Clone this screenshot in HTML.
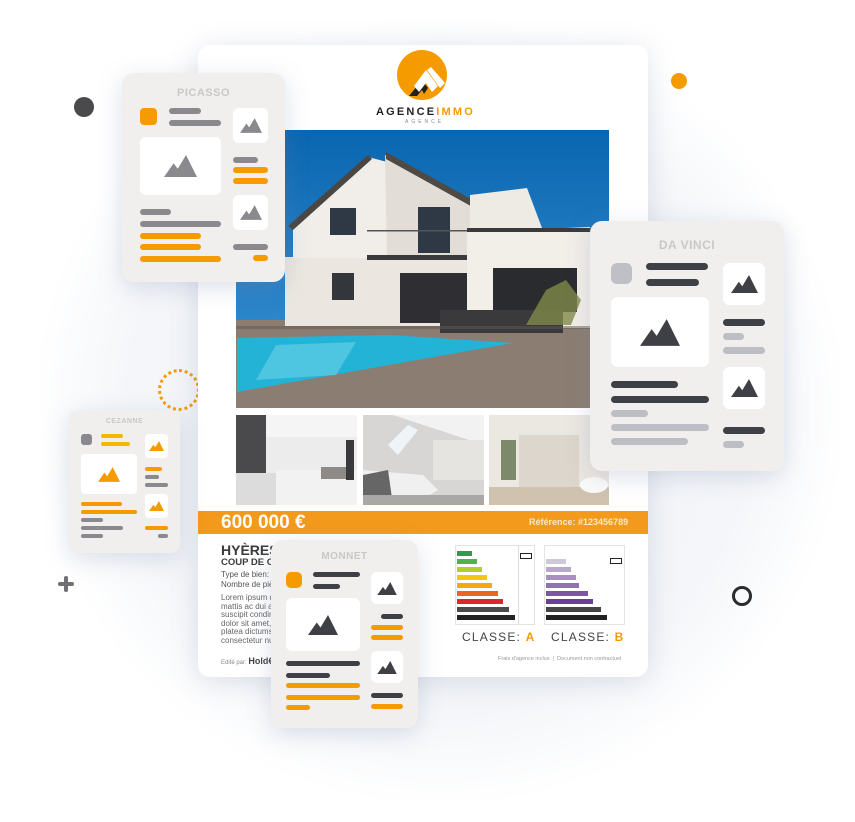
<!DOCTYPE html>
<html><head><meta charset="utf-8"><style>
*{margin:0;padding:0;box-sizing:border-box}
body{width:855px;height:822px;position:relative;overflow:hidden;background:#fff;font-family:"Liberation Sans",sans-serif}
.a{position:absolute}
.card{position:absolute;background:#f0efee;border-radius:12px;box-shadow:0 6px 24px rgba(120,135,170,.25)}
.b{position:absolute;border-radius:4px}
.box{position:absolute;background:#fff;border-radius:6px;display:flex;align-items:center;justify-content:center}
.t{position:absolute;font-weight:bold;color:#c9c8c8;text-align:center;letter-spacing:.5px}
.g{background:#8a898e}.o{background:#f59b00}.d{background:#3f4046}.l{background:#bdbec4}.y{background:#f5b800}
</style></head><body>
<div class="a" style="left:40px;top:20px;width:800px;height:780px;border-radius:45%;background:radial-gradient(ellipse at center,#eef1f6 0%,#f4f6f9 55%,rgba(255,255,255,0) 72%)"></div>

<!-- decorations -->
<div class="a" style="left:74px;top:97px;width:20px;height:20px;border-radius:50%;background:#4a4a4c"></div>
<div class="a" style="left:671px;top:73px;width:16px;height:16px;border-radius:50%;background:#f59b00"></div>
<div class="a" style="left:732px;top:586px;width:20px;height:20px;border-radius:50%;border:3px solid #2c2c2e"></div>
<div class="a" style="left:58px;top:582px;width:16px;height:4px;background:#707075;border-radius:2px"></div>
<div class="a" style="left:64px;top:576px;width:4px;height:16px;background:#707075;border-radius:2px"></div>
<div class="a" style="left:158px;top:369px;width:42px;height:42px;border-radius:50%;border:3px dotted #f59b00"></div>

<!-- main doc -->
<div class="a" style="left:198px;top:45px;width:450px;height:632px;background:#fff;border-radius:12px;box-shadow:0 4px 28px rgba(110,125,160,.22)"></div>
<div class="a" style="left:397px;top:50px;width:50px;height:50px;border-radius:50%;background:#f59b00;overflow:hidden">
<svg width="50" height="50" viewBox="0 0 50 50"><path d="M12 46 L25 30 L31 38 L27 44 L25 40 L20 46 Z" fill="#231f20"/><path d="M17 36 L29 20 L41 36 L35 42 L29 33 L22 42Z" fill="#fff"/><path d="M30 20 L34 17 L48 33 L43 38Z" fill="#fff"/></svg></div>
<div class="a" style="left:376px;top:106px;width:96px;font-size:11px;font-weight:bold;letter-spacing:2.2px;color:#222;white-space:nowrap">AGENCE<span style="color:#f59b00">IMMO</span></div>
<div class="a" style="left:405px;top:119px;font-size:5px;letter-spacing:3px;color:#888">AGENCE</div>

<!-- photo -->
<svg class="a" style="left:236px;top:130px" width="373" height="278" viewBox="0 0 373 278">
<defs><linearGradient id="sky" x1="0" y1="0" x2="0" y2="1"><stop offset="0" stop-color="#0a66b0"/><stop offset="1" stop-color="#3d95d6"/></linearGradient></defs>
<rect width="373" height="278" fill="url(#sky)"/>
<rect y="190" width="373" height="88" fill="#8c7d72"/>
<polygon points="1,208 154,205 277,213 1,262" fill="#22b3d6"/>
<polygon points="40,215 120,212 100,245 20,250" fill="#6dd0e8" opacity=".6"/>
<polygon points="49,127 231,127 231,196 49,196" fill="#ebe7e0"/>
<polygon points="57,96 132,27 151,32 151,128 57,128" fill="#f1eee9"/>
<polygon points="52,96 132,25 136,29 57,100" fill="#4a4644"/>
<polygon points="149,25 262,86 262,128 151,128" fill="#e2ddd6"/>
<polygon points="150,22 262,84 260,90 150,29" fill="#4f4a44"/>
<polygon points="234,65 291,58 306,98 234,102" fill="#eeeae4"/>
<polygon points="231,102 354,97 354,198 231,198" fill="#f2eee8"/>
<rect x="231" y="98" width="123" height="4" fill="#3a3a3c"/>
<rect x="164" y="143" width="67" height="50" fill="#2f2f33"/>
<rect x="257" y="138" width="84" height="44" fill="#2a2b2f"/>
<rect x="94" y="78" width="26" height="27" fill="#2e3945"/>
<rect x="182" y="77" width="32" height="46" fill="#2e3945"/>
<rect x="96" y="143" width="22" height="27" fill="#33363b"/>
<rect x="131" y="125" width="100" height="5" fill="#3a3a3c"/>
<rect x="131" y="100" width="100" height="1.5" fill="#555"/>
<rect x="204" y="180" width="123" height="23" fill="#3a3a3c"/>
<path d="M290 195 L310 160 L330 150 L345 170 L335 195Z" fill="#7f8a4a" opacity=".8"/>
<rect x="0" y="196" width="373" height="3" fill="#5e5752" opacity=".5"/>
</svg>

<!-- thumbs -->
<svg class="a" style="left:236px;top:415px" width="121" height="90"><rect width="121" height="90" fill="#ececec"/><rect width="30" height="90" fill="#4a4a4d"/><rect x="30" y="0" width="91" height="22" fill="#f5f5f5"/><rect x="40" y="55" width="81" height="35" fill="#f2f2f2"/><rect x="85" y="52" width="32" height="12" fill="#8d8a88"/><rect x="110" y="25" width="8" height="40" fill="#3a3a3c"/><rect x="0" y="58" width="40" height="32" fill="#dcdcdc"/></svg>
<svg class="a" style="left:363px;top:415px" width="121" height="90"><rect width="121" height="90" fill="#d8d6d4"/><polygon points="0,0 121,0 121,30 30,0" fill="#f2f2f2"/><polygon points="25,30 45,10 55,15 35,40" fill="#eef4f8"/><rect x="70" y="25" width="51" height="40" fill="#e6e4e0"/><polygon points="0,55 60,60 75,75 50,90 0,90" fill="#f0f0f0"/><polygon points="0,60 25,55 30,90 0,90" fill="#666"/><rect x="0" y="80" width="121" height="10" fill="#aaa8a6"/></svg>
<svg class="a" style="left:489px;top:415px" width="120" height="90"><rect width="120" height="90" fill="#ebe7e1"/><rect x="30" y="20" width="60" height="55" fill="#ddd6cc"/><rect x="12" y="25" width="15" height="40" fill="#7d8a6a"/><rect x="0" y="72" width="120" height="18" fill="#cfc3b0"/><ellipse cx="105" cy="70" rx="14" ry="8" fill="#fafafa"/></svg>

<!-- price bar -->
<div class="a" style="left:198px;top:511px;width:450px;height:23px;background:#f39a1c"></div>
<div class="a" style="left:221px;top:512px;font-size:19px;font-weight:bold;color:#fff">600 000 €</div>
<div class="a" style="left:529px;top:517px;font-size:9px;color:#fde7c8;font-weight:bold">Référence: #123456789</div>

<div class="a" style="left:221px;top:542px;font-size:14px;font-weight:bold;color:#3a3a3c">HYÈRES</div>
<div class="a" style="left:221px;top:557px;font-size:9.5px;font-weight:bold;color:#3a3a3c">COUP DE COEUR</div>
<div class="a" style="left:221px;top:570px;width:215px;font-size:8px;line-height:10px;color:#555;white-space:nowrap;overflow:hidden">Type de bien: Maison &nbsp;&nbsp;&nbsp;&nbsp;&nbsp;&nbsp;&nbsp;&nbsp;&nbsp;&nbsp;&nbsp;&nbsp;&nbsp;&nbsp;&nbsp;&nbsp;&nbsp;&nbsp;&nbsp;&nbsp; Surface: 180 m²<br>Nombre de pièces: 6</div>
<div class="a" style="left:221px;top:594px;width:212px;font-size:8px;line-height:8.6px;color:#666;white-space:nowrap;overflow:hidden">Lorem ipsum dolor sit amet, consectetur adipiscis<br>mattis ac dui at, tincidunt lobortis maximus ornares<br>suscipit condimentum mi, at volutpat dolor ipsum<br>dolor sit amet, consectetur adipiscing elit sed<br>platea dictumst. Nulla facilisi, varius ac congue<br>consectetur nunc.</div>
<div class="a" style="left:221px;top:656px;font-size:6px;color:#888">Edité par: <b style="font-size:9px;color:#444">Hold€</b></div>
<div class="a" style="left:498px;top:656px;font-size:5.5px;color:#999">Frais d'agence inclus &nbsp;| &nbsp;Document non contractuel</div>

<!-- energy charts -->
<div class="a" style="left:455px;top:545px;width:80px;height:80px;background:#fff;border:1px solid #e3e3e3">
<div class="a" style="left:1px;top:5px;width:15px;height:5px;background:#2e9e44"></div>
<div class="a" style="left:1px;top:13px;width:20px;height:5px;background:#54b048"></div>
<div class="a" style="left:1px;top:21px;width:25px;height:5px;background:#b5cc2c"></div>
<div class="a" style="left:1px;top:29px;width:30px;height:5px;background:#f2c611"></div>
<div class="a" style="left:1px;top:37px;width:35px;height:5px;background:#f3a81c"></div>
<div class="a" style="left:1px;top:45px;width:41px;height:5px;background:#e8661f"></div>
<div class="a" style="left:1px;top:53px;width:46px;height:5px;background:#d7282c"></div>
<div class="a" style="left:1px;top:61px;width:52px;height:5px;background:#4a4a4a"></div>
<div class="a" style="left:1px;top:69px;width:58px;height:5px;background:#222"></div>
<div class="a" style="left:62px;top:0;width:1px;height:78px;background:#ddd"></div>
<div class="a" style="left:64px;top:7px;width:12px;height:6px;border:1px solid #222"></div>
</div>
<div class="a" style="left:544px;top:545px;width:81px;height:80px;background:#fff;border:1px solid #e3e3e3">
<div class="a" style="left:1px;top:13px;width:20px;height:5px;background:#cfc8d8"></div>
<div class="a" style="left:1px;top:21px;width:25px;height:5px;background:#b9a8cc"></div>
<div class="a" style="left:1px;top:29px;width:30px;height:5px;background:#a88fc0"></div>
<div class="a" style="left:1px;top:37px;width:33px;height:5px;background:#9270b4"></div>
<div class="a" style="left:1px;top:45px;width:42px;height:5px;background:#7d55a6"></div>
<div class="a" style="left:1px;top:53px;width:47px;height:5px;background:#6a3f98"></div>
<div class="a" style="left:1px;top:61px;width:55px;height:5px;background:#444"></div>
<div class="a" style="left:1px;top:69px;width:61px;height:5px;background:#222"></div>
<div class="a" style="left:65px;top:12px;width:12px;height:6px;border:1px solid #222"></div>
</div>
<div class="a" style="left:462px;top:630px;font-size:12px;letter-spacing:1.2px;color:#444;white-space:nowrap">CLASSE: <b style="color:#f59b00">A</b></div>
<div class="a" style="left:551px;top:630px;font-size:12px;letter-spacing:1.2px;color:#444;white-space:nowrap">CLASSE: <b style="color:#f59b00">B</b></div>

<svg width="0" height="0" style="position:absolute"><defs><path id="m" d="M0 16 L7 6 L10 10 L16 0 L24 16Z"/></defs></svg>

<!-- PICASSO -->
<div class="card" style="left:122px;top:73px;width:163px;height:209px">
<div class="t" style="left:0;top:14px;width:163px;font-size:11px">PICASSO</div>
<div class="b o" style="left:18px;top:35px;width:17px;height:17px"></div>
<div class="b g" style="left:47px;top:35px;width:32px;height:6px"></div>
<div class="b g" style="left:47px;top:47px;width:52px;height:6px"></div>
<div class="box" style="left:18px;top:64px;width:81px;height:58px"><svg width="33" height="22" viewBox="0 0 24 16"><use href="#m" fill="#8a898e"/></svg></div>
<div class="box" style="left:111px;top:35px;width:35px;height:35px"><svg width="22" height="15" viewBox="0 0 24 16"><use href="#m" fill="#8a898e"/></svg></div>
<div class="b g" style="left:111px;top:84px;width:25px;height:6px"></div>
<div class="b o" style="left:111px;top:94px;width:35px;height:6px"></div>
<div class="b o" style="left:111px;top:105px;width:35px;height:6px"></div>
<div class="box" style="left:111px;top:122px;width:35px;height:35px"><svg width="22" height="15" viewBox="0 0 24 16"><use href="#m" fill="#8a898e"/></svg></div>
<div class="b g" style="left:111px;top:171px;width:35px;height:6px"></div>
<div class="b o" style="left:131px;top:182px;width:15px;height:6px"></div>
<div class="b g" style="left:18px;top:136px;width:31px;height:6px"></div>
<div class="b g" style="left:18px;top:148px;width:81px;height:6px"></div>
<div class="b o" style="left:18px;top:160px;width:61px;height:6px"></div>
<div class="b o" style="left:18px;top:171px;width:61px;height:6px"></div>
<div class="b o" style="left:18px;top:183px;width:81px;height:6px"></div>
</div>

<!-- CEZANNE -->
<div class="card" style="left:69px;top:410px;width:111px;height:143px;border-radius:9px">
<div class="t" style="left:0;top:8px;width:111px;font-size:7px">CEZANNE</div>
<div class="b" style="left:12px;top:24px;width:11px;height:11px;background:#8a898e;border-radius:3px"></div>
<div class="b y" style="left:32px;top:24px;width:22px;height:3.5px"></div>
<div class="b y" style="left:32px;top:32px;width:29px;height:3.5px"></div>
<div class="box" style="left:12px;top:44px;width:56px;height:40px;border-radius:4px"><svg width="22" height="15" viewBox="0 0 24 16"><use href="#m" fill="#f59b00"/></svg></div>
<div class="box" style="left:76px;top:24px;width:23px;height:24px;border-radius:4px"><svg width="15" height="10" viewBox="0 0 24 16"><use href="#m" fill="#f59b00"/></svg></div>
<div class="b o" style="left:76px;top:57px;width:17px;height:3.5px"></div>
<div class="b g" style="left:76px;top:65px;width:14px;height:3.5px"></div>
<div class="b g" style="left:76px;top:73px;width:23px;height:3.5px"></div>
<div class="box" style="left:76px;top:84px;width:23px;height:24px;border-radius:4px"><svg width="15" height="10" viewBox="0 0 24 16"><use href="#m" fill="#f59b00"/></svg></div>
<div class="b o" style="left:76px;top:116px;width:23px;height:3.5px"></div>
<div class="b g" style="left:89px;top:124px;width:10px;height:3.5px"></div>
<div class="b o" style="left:12px;top:92px;width:41px;height:3.5px"></div>
<div class="b o" style="left:12px;top:100px;width:56px;height:3.5px"></div>
<div class="b g" style="left:12px;top:108px;width:22px;height:3.5px"></div>
<div class="b g" style="left:12px;top:116px;width:42px;height:3.5px"></div>
<div class="b g" style="left:12px;top:124px;width:22px;height:3.5px"></div>
</div>

<!-- DA VINCI -->
<div class="card" style="left:590px;top:221px;width:194px;height:250px">
<div class="t" style="left:0;top:17px;width:194px;font-size:12px">DA VINCI</div>
<div class="b" style="left:21px;top:42px;width:21px;height:21px;background:#bfc0c5;border-radius:6px"></div>
<div class="b d" style="left:56px;top:42px;width:62px;height:7px"></div>
<div class="b d" style="left:56px;top:58px;width:53px;height:7px"></div>
<div class="box" style="left:21px;top:76px;width:98px;height:70px;border-radius:7px"><svg width="40" height="27" viewBox="0 0 24 16"><use href="#m" fill="#3f4046"/></svg></div>
<div class="box" style="left:133px;top:42px;width:42px;height:42px"><svg width="27" height="18" viewBox="0 0 24 16"><use href="#m" fill="#3f4046"/></svg></div>
<div class="b d" style="left:133px;top:98px;width:42px;height:7px"></div>
<div class="b l" style="left:133px;top:112px;width:21px;height:7px"></div>
<div class="b l" style="left:133px;top:126px;width:42px;height:7px"></div>
<div class="box" style="left:133px;top:146px;width:42px;height:42px"><svg width="27" height="18" viewBox="0 0 24 16"><use href="#m" fill="#3f4046"/></svg></div>
<div class="b d" style="left:133px;top:206px;width:42px;height:7px"></div>
<div class="b l" style="left:133px;top:220px;width:21px;height:7px"></div>
<div class="b d" style="left:21px;top:160px;width:67px;height:7px"></div>
<div class="b d" style="left:21px;top:175px;width:98px;height:7px"></div>
<div class="b l" style="left:21px;top:189px;width:37px;height:7px"></div>
<div class="b l" style="left:21px;top:203px;width:98px;height:7px"></div>
<div class="b l" style="left:21px;top:217px;width:77px;height:7px"></div>
</div>

<!-- MONNET -->
<div class="card" style="left:271px;top:540px;width:147px;height:188px">
<div class="t" style="left:0;top:11px;width:147px;font-size:10px">MONNET</div>
<div class="b o" style="left:15px;top:32px;width:16px;height:16px;border-radius:5px"></div>
<div class="b d" style="left:42px;top:32px;width:47px;height:5px"></div>
<div class="b d" style="left:42px;top:44px;width:27px;height:5px"></div>
<div class="box" style="left:15px;top:58px;width:74px;height:53px"><svg width="30" height="20" viewBox="0 0 24 16"><use href="#m" fill="#3f4046"/></svg></div>
<div class="box" style="left:100px;top:32px;width:32px;height:32px"><svg width="20" height="13" viewBox="0 0 24 16"><use href="#m" fill="#3f4046"/></svg></div>
<div class="b d" style="left:110px;top:74px;width:22px;height:5px"></div>
<div class="b o" style="left:100px;top:85px;width:32px;height:5px"></div>
<div class="b o" style="left:100px;top:95px;width:32px;height:5px"></div>
<div class="box" style="left:100px;top:111px;width:32px;height:32px"><svg width="20" height="13" viewBox="0 0 24 16"><use href="#m" fill="#3f4046"/></svg></div>
<div class="b d" style="left:100px;top:153px;width:32px;height:5px"></div>
<div class="b o" style="left:100px;top:164px;width:32px;height:5px"></div>
<div class="b d" style="left:15px;top:121px;width:74px;height:5px"></div>
<div class="b d" style="left:15px;top:133px;width:44px;height:5px"></div>
<div class="b o" style="left:15px;top:143px;width:74px;height:5px"></div>
<div class="b o" style="left:15px;top:155px;width:74px;height:5px"></div>
<div class="b o" style="left:15px;top:165px;width:24px;height:5px"></div>
</div>
</body></html>
